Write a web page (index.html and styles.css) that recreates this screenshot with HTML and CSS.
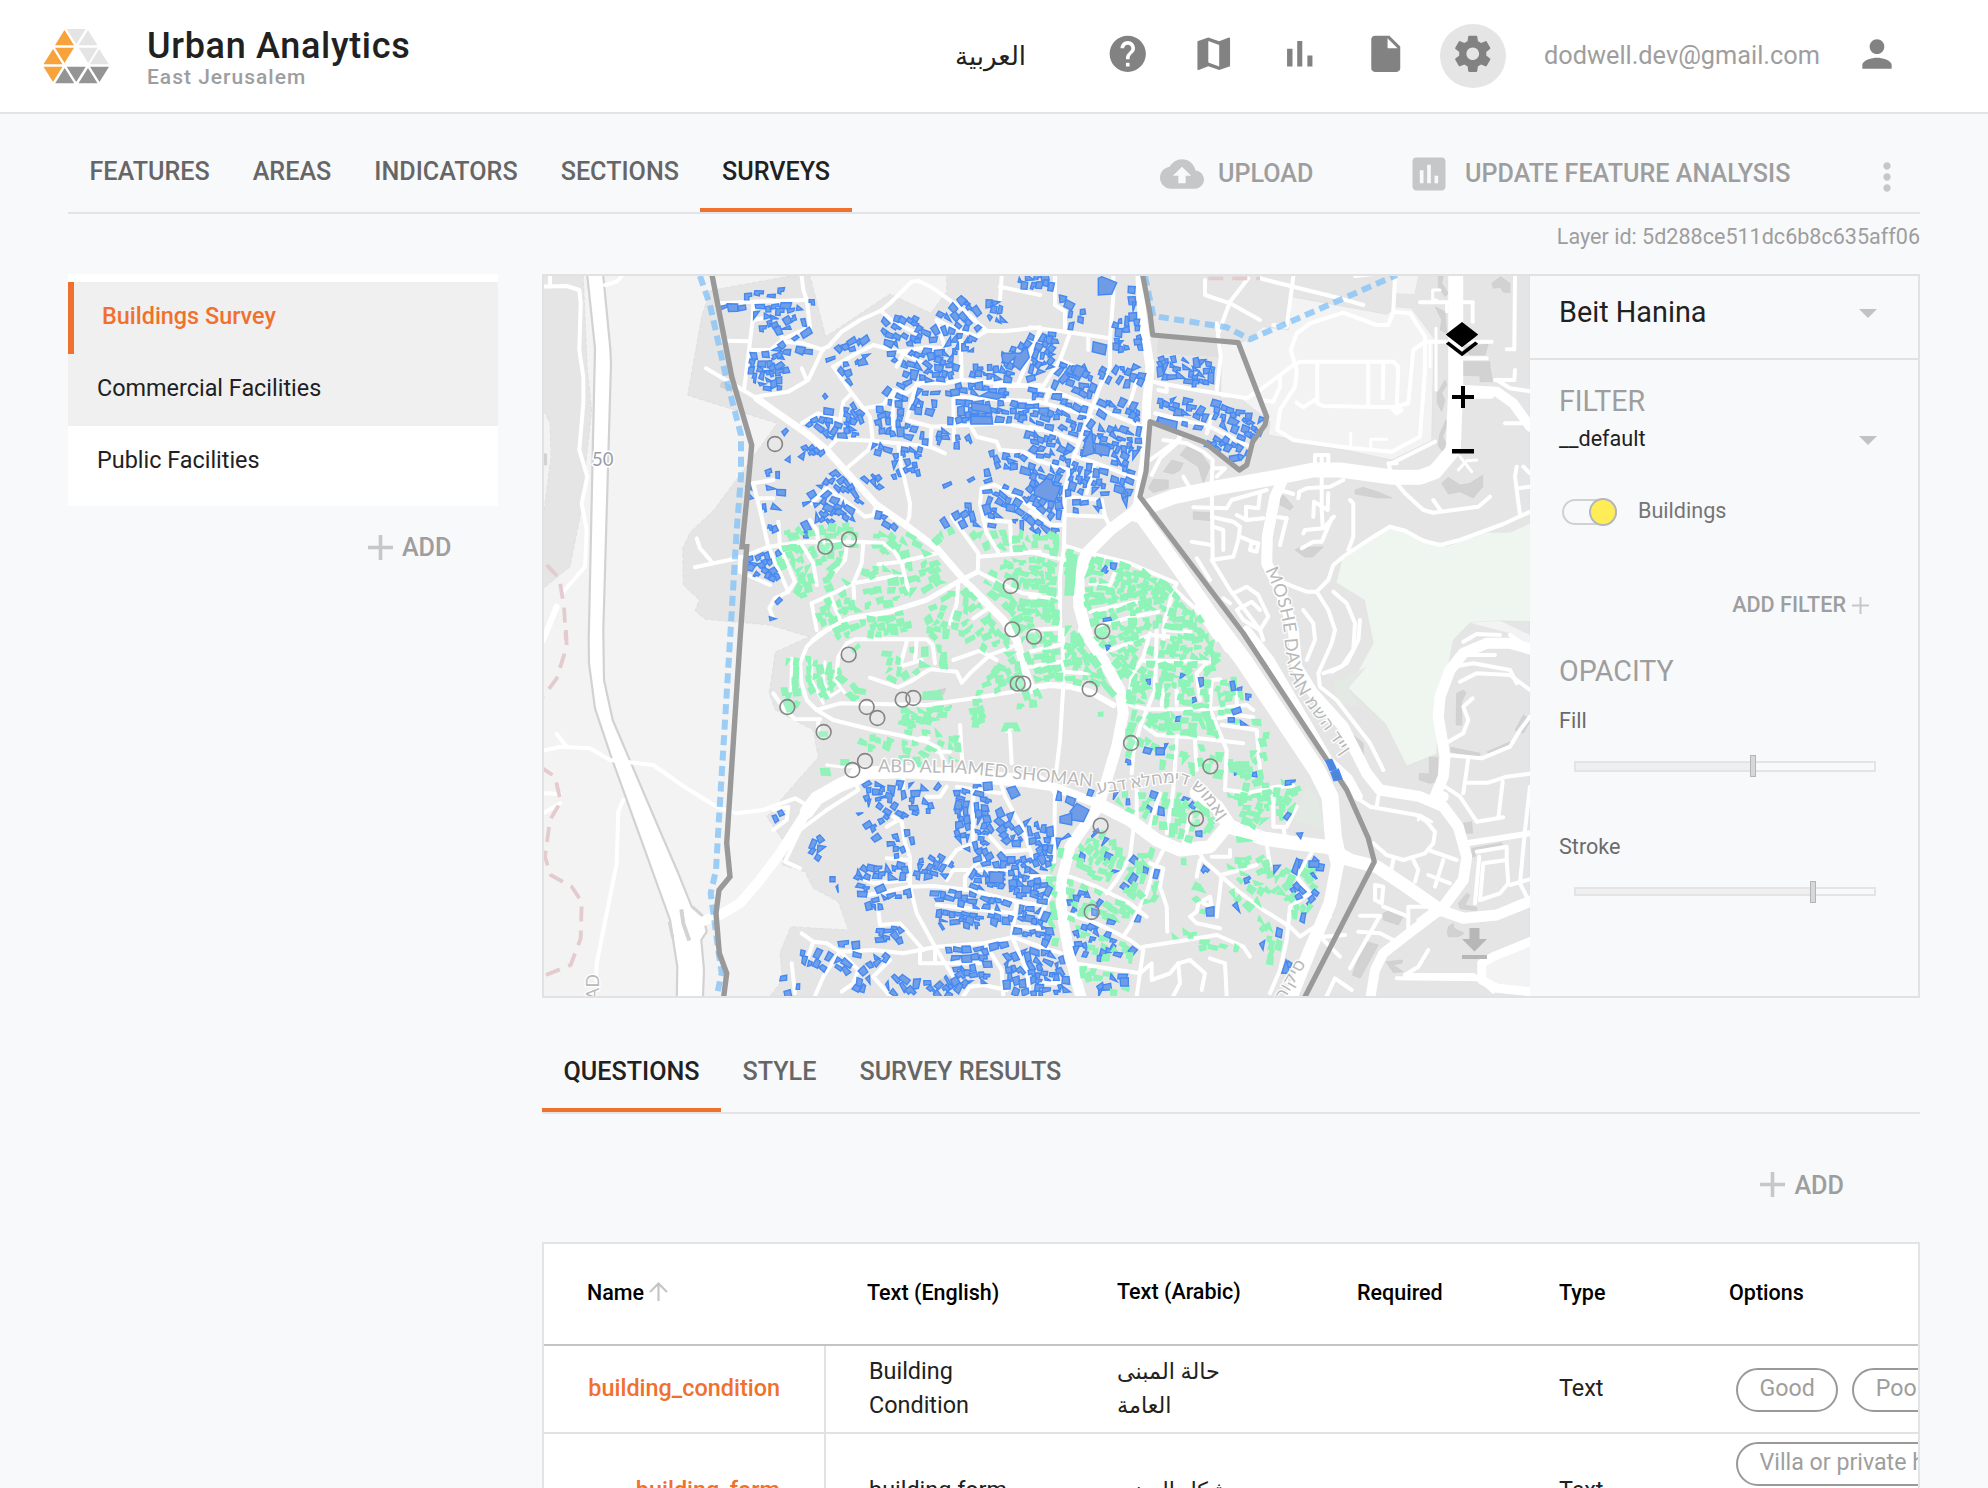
FILE: index.html
```html
<!DOCTYPE html>
<html lang="en">
<head>
<meta charset="utf-8">
<title>Urban Analytics</title>
<link rel="stylesheet" href="styles.css">
</head>
<body>
<header class="topbar">
  <svg class="logo" viewBox="43 28 67 56" aria-hidden="true">
    <g fill="#f7a23b"><path d="M64.5 30l9.5 15.300h-19zM53 49l9.500 15.200h-19zM55 47.700h19l-9.500 15.300zM43.500 66.800h19l-9.500 15.300z"/></g>
    <g fill="#e4e4e4"><path d="M66.700 29h19l-9.500 15.300zM88 30l9.500 15.300h-19zM78.700 47.700h19l-9.500 15.300zM99.200 49l9.500 15.200h-19z"/></g>
    <g fill="#949494"><path d="M64.700 68l9.500 15.200h-19zM66.700 66.800h19l-9.500 15.300zM88 68l9.500 15.200h-19zM90 66.800h19l-9.500 15.300z"/></g>
  </svg>
  <div class="brand"><div class="brand-title">Urban Analytics</div><div class="brand-sub">East Jerusalem</div></div>
  <div class="lang" lang="ar">العربية</div>
  <nav class="icons">
    <span class="ico"><svg viewBox="0 0 24 24"><path d="M12 2C6.480 2 2 6.480 2 12s4.480 10 10 10 10-4.480 10-10S17.520 2 12 2zm1 17h-2v-2h2v2zm2.070-7.750l-.9.920C13.450 12.900 13 13.500 13 15h-2v-.5c0-1.100.45-2.100 1.170-2.830l1.240-1.260c.37-.36.59-.86.59-1.410 0-1.100-.9-2-2-2s-2 .9-2 2H8c0-2.210 1.790-4 4-4s4 1.790 4 4c0 .88-.36 1.680-.93 2.250z"/></svg></span>
    <span class="ico"><svg viewBox="0 0 24 24"><path d="M20.500 3l-.16.030L15 5.100 9 3 3.360 4.900c-.21.070-.36.250-.36.480V20.500c0 .28.220.5.5.5l.16-.03L9 18.900l6 2.100 5.640-1.900c.21-.07.36-.25.360-.48V3.500c0-.28-.22-.5-.5-.5zM15 19l-6-2.110V5l6 2.110V19z"/></svg></span>
    <span class="ico"><svg viewBox="0 0 24 24"><path d="M5 9.200h3V19H5zM10.600 5h2.800v14h-2.800zm5.600 8H19v6h-2.800z"/></svg></span>
    <span class="ico"><svg viewBox="0 0 24 24"><path d="M6 2c-1.100 0-1.990.9-1.990 2L4 20c0 1.100.89 2 1.990 2H18c1.100 0 2-.9 2-2V8l-6-6H6zm7 7V3.500L18.500 9H13z"/></svg></span>
    <span class="ico active"><svg viewBox="0 0 24 24"><path d="M19.430 12.980c.04-.32.070-.64.070-.98s-.03-.66-.07-.98l2.110-1.650c.19-.15.240-.42.120-.64l-2-3.460c-.12-.22-.39-.3-.61-.22l-2.490 1c-.52-.4-1.080-.73-1.690-.98l-.38-2.650C14.460 2.180 14.250 2 14 2h-4c-.25 0-.46.180-.49.420l-.38 2.650c-.61.250-1.170.59-1.690.98l-2.490-1c-.23-.09-.49 0-.61.220l-2 3.460c-.13.220-.07.490.12.640l2.110 1.650c-.04.320-.07.650-.07.980s.03.660.07.980l-2.110 1.650c-.19.150-.24.420-.12.640l2 3.460c.12.220.39.300.61.220l2.490-1c.52.400 1.080.730 1.690.980l.38 2.650c.03.240.24.420.49.420h4c.25 0 .46-.18.490-.42l.38-2.650c.61-.25 1.170-.59 1.690-.98l2.490 1c.23.090.49 0 .61-.22l2-3.460c.12-.22.070-.49-.12-.64l-2.110-1.650zM12 15.500c-1.930 0-3.500-1.570-3.500-3.500s1.570-3.500 3.500-3.500 3.500 1.570 3.500 3.500-1.570 3.500-3.500 3.500z"/></svg></span>
  </nav>
  <div class="email">dodwell.dev@gmail.com</div>
  <svg class="person" viewBox="0 0 24 24"><path d="M12 12c2.210 0 4-1.790 4-4s-1.790-4-4-4-4 1.790-4 4 1.790 4 4 4zm0 2c-2.670 0-8 1.340-8 4v2h16v-2c0-2.660-5.330-4-8-4z"/></svg>
</header>

<div class="page">
  <div class="tabbar">
    <div class="tab">FEATURES</div><div class="tab">AREAS</div><div class="tab">INDICATORS</div><div class="tab">SECTIONS</div><div class="tab on">SURVEYS</div>
    <div class="actions">
      <svg class="i-cloud" viewBox="0 0 24 24"><path d="M19.350 10.040C18.670 6.590 15.640 4 12 4 9.110 4 6.600 5.640 5.350 8.040 2.340 8.360 0 10.910 0 14c0 3.310 2.690 6 6 6h13c2.760 0 5-2.240 5-5 0-2.640-2.050-4.780-4.650-4.960zM14 13v4h-4v-4H7l5-5 5 5h-3z"/></svg>
      <span class="act upload">UPLOAD</span>
      <svg class="i-chart" viewBox="0 0 24 24"><path d="M19 3H5c-1.100 0-2 .9-2 2v14c0 1.100.9 2 2 2h14c1.100 0 2-.9 2-2V5c0-1.100-.9-2-2-2zM9 17H7v-7h2v7zm4 0h-2V7h2v10zm4 0h-2v-4h2v4z"/></svg>
      <span class="act update">UPDATE FEATURE ANALYSIS</span>
      <svg class="i-more" viewBox="0 0 24 24"><path d="M12 8c1.100 0 2-.9 2-2s-.9-2-2-2-2 .9-2 2 .9 2 2 2zm0 2c-1.100 0-2 .9-2 2s.9 2 2 2 2-.9 2-2-.9-2-2-2zm0 6c-1.100 0-2 .9-2 2s.9 2 2 2 2-.9 2-2-.9-2-2-2z"/></svg>
    </div>
  </div>
  <div class="layerid">Layer id: 5d288ce511dc6b8c635aff06</div>

  <div class="columns">
    <aside class="side">
      <div class="list">
        <div class="item selected">Buildings Survey</div>
        <div class="item hover">Commercial Facilities</div>
        <div class="item">Public Facilities</div>
      </div>
      <div class="add side-add"><svg viewBox="0 0 25 25"><path d="M10.700 0h3.600v10.700H25v3.600H14.300V25h-3.600V14.300H0v-3.600h10.700z"/></svg><span>ADD</span></div>
    </aside>

    <main class="main">
      <section class="mapcard">
        <div class="mapwrap">
          <svg id="map" class="map" viewBox="544 276 986 720"></svg>
          <svg class="layers" viewBox="2 2 20 20"><path d="M11.990 18.540l-7.370-5.730L3 14.070l9 7 9-7-1.630-1.270-7.380 5.740zM12 16l7.360-5.730L21 9l-9-7-9 7 1.630 1.270L12 16z"/></svg>
          <svg class="zoomin" viewBox="0 0 22 22"><path d="M9 0h4v9h9v4h-9v9H9v-9H0V9h9z"/></svg>
          <svg class="zoomout" viewBox="0 0 22 5"><path d="M0 0h22v4.500H0z"/></svg>
          <svg class="download" viewBox="0 0 25 31"><path d="M7.500 0h10v11H25L12.500 23.500 0 11h7.500zM0 27h25v4H0z"/></svg>
        </div>
        <div class="controls">
          <div class="area"><span>Beit Hanina</span><i class="caret"></i></div>
          <div class="filter">
            <div class="cap">FILTER</div>
            <div class="default"><span>__default</span><i class="caret"></i></div>
            <div class="toggle-row"><span class="toggle"><span class="knob"></span></span><span class="toggle-label">Buildings</span></div>
            <div class="addfilter"><span>ADD FILTER</span><svg viewBox="0 0 17 17"><path d="M7.500 0h2v7.500H17v2H9.500V17h-2V9.500H0v-2h7.500z"/></svg></div>
            <div class="cap opacity">OPACITY</div>
            <div class="lbl">Fill</div>
            <div class="slider"><div class="track"><div class="fill" style="width:59.3%"></div></div><div class="thumb" style="left:58.3%"></div></div>
            <div class="lbl stroke">Stroke</div>
            <div class="slider thin"><div class="track"><div class="fill" style="width:79.200%"></div></div><div class="thumb" style="left:78.100%"></div></div>
          </div>
        </div>
      </section>

      <div class="tabbar second"><div class="tab on q">QUESTIONS</div><div class="tab">STYLE</div><div class="tab">SURVEY RESULTS</div></div>
      <div class="add table-add"><svg viewBox="0 0 25 25"><path d="M10.700 0h3.600v10.700H25v3.600H14.300V25h-3.600V14.300H0v-3.600h10.700z"/></svg><span>ADD</span></div>

      <section class="table">
        <div class="row head">
          <div class="c-name">Name<svg viewBox="0 0 19 19"><path d="M9.500 19V1.500M1 10l8.500-8.500L18 10" fill="none" stroke="#c6c6c6" stroke-width="2.200"/></svg></div>
          <div class="c-en">Text (English)</div><div class="c-ar">Text (Arabic)</div><div class="c-req">Required</div><div class="c-type">Type</div><div class="c-opt">Options</div>
        </div>
        <div class="row">
          <div class="c-name"><span>building_condition</span></div>
          <div class="c-en">Building<br>Condition</div><div class="c-ar" lang="ar">حالة المبنى<br>العامة</div><div class="c-req"></div><div class="c-type">Text</div>
          <div class="c-opt"><span class="chip">Good</span><span class="chip">Poor</span></div>
        </div>
        <div class="row tall">
          <div class="c-name"><span>building_form</span></div>
          <div class="c-en">building form</div><div class="c-ar" lang="ar">شكل المبنى</div><div class="c-req"></div><div class="c-type">Text</div>
          <div class="c-opt"><span class="chip">Villa or private house</span></div>
        </div>
      </section>
    </main>
  </div>
</div>
<script src="map.js"></script>
</body>
</html>
```
FILE: styles.css
```css
* { box-sizing: border-box; }
html, body { margin: 0; }
body {
  height: 1488px;
  overflow: hidden;
  background: #f8f9fb;
  color: #212121;
  font-family: Roboto, "DejaVu Sans", sans-serif;
  font-size: 23.400px;
}
svg { display: block; }

.topbar {
  display: flex;
  height: 114px;
  background: #fff;
  border-bottom: 2px solid #e2e4e6;
  padding-left: 43px;
}
.logo { width: 67px; height: 56px; margin-top: 28px; }
.brand { margin-left: 37px; padding-top: 25px; width: 808px; }
.brand-title { font-size: 36px; line-height: 43px; font-weight: 500; letter-spacing: .68px; }
.brand-sub { font-size: 21px; line-height: 19px; font-weight: 500; color: #9e9e9e; letter-spacing: 1px; }
.lang { width: 140px; font-size: 26px; line-height: 112px; }
.icons { display: flex; gap: 20px; margin-top: 24px; }
.ico { width: 66px; height: 64px; display: flex; justify-content: center; padding-top: 8px; border-radius: 50%; }
.ico.active { background: #e5e5e5; margin-left: 1px; }
.ico svg { width: 43.500px; height: 43.500px; fill: #828282; }
.email { width: 274px; margin-left: 38px; font-size: 25.300px; line-height: 112px; color: #9e9e9e; white-space: nowrap; }
.person { width: 44px; height: 44px; margin: 32px 0 0 37px; fill: #828282; }

.page { padding: 0 68px; }
.tabbar { display: flex; height: 100px; border-bottom: 2px solid #e2e4e6; }
.tab {
  padding: 41px 21.500px 0;
  line-height: 34px;
  font-size: 25.150px;
  font-weight: 500;
  color: #666;
  white-space: nowrap;
}
.tab.on { color: #212121; border-bottom: 4px solid #f0702e; }
.actions { display: flex; margin-left: auto; color: #9e9e9e; font-weight: 500; font-size: 25.150px; }
.actions svg { fill: #c6c7c9; }
.act { line-height: 34px; padding-top: 43px; white-space: nowrap; }
.upload { width: 195px; margin-left: 14px; }
.update { width: 400px; margin-left: 20px; }
.i-cloud { width: 44px; height: 44px; margin-top: 38px; }
.i-chart { width: 44px; height: 44px; margin: 38px -6px 0 -6px; }
.i-more { width: 44px; height: 44px; margin: 41px 11px 0 0; }
.layerid { height: 60px; padding-top: 11px; line-height: 24px; font-size: 21.550px; text-align: right; color: #9e9e9e; }

.columns { display: flex; gap: 44px; }
.side { width: 430px; }
.list { background: #fff; padding: 8px 0; }
.item { height: 72px; line-height: 68px; padding-left: 29px; }
.item.hover { background: #f0f0f0; }
.item.selected { background: #f0f0f0; color: #f0702e; font-weight: 500; border-left: 6px solid #f0702e; padding-left: 28px; }
.add { display: flex; align-items: center; justify-content: flex-end; gap: 9px; color: #9e9e9e; font-weight: 500; font-size: 25.200px; }
.add svg { width: 25px; height: 25px; fill: #c6c7c9; }
.add span { position: relative; top: .5px; }
.side-add { padding: 27px 46.500px 0 0; }
.side-add span { top: 0; }

.main { width: 1378px; }
.mapcard { display: flex; height: 724px; border: 2px solid #e2e2e2; }
.mapwrap { position: relative; width: 986px; height: 720px; }
.map { width: 986px; height: 720px; background: #f3f3f3; }
.layers, .zoomin, .zoomout, .download { position: absolute; }
.layers { left: 900px; top: 46px; width: 36px; height: 36px; }
.zoomin { left: 908px; top: 110px; width: 22px; height: 22px; }
.zoomout { left: 908px; top: 173px; width: 22px; height: 5px; }
.download { left: 918px; top: 652px; width: 25px; height: 31px; fill: #b7b7b7; }

.controls { flex: 1; }
.caret { border: 9px solid transparent; border-top-color: #c0c2c4; border-bottom: 0; }
.area { display: flex; align-items: center; justify-content: space-between; height: 84px; padding: 0 41px 8px 29px; border-bottom: 2px solid #e2e2e2; font-size: 28.800px; }
.area span { margin-top: -2px; }
.filter { padding: 24px 41px 0 29px; }
.cap { font-size: 28.600px; line-height: 34px; color: #9e9e9e; }
.default { display: flex; align-items: center; justify-content: space-between; height: 42px; font-size: 21.600px; }
.default span { margin-top: -2px; }
.default .caret { margin-top: 3px; }
.toggle-row { display: flex; align-items: center; height: 28px; margin-top: 38px; }
.toggle { position: relative; width: 55px; height: 26px; margin-left: 3px; border: 2px solid #d0d1d3; border-radius: 13px; }
.knob { position: absolute; right: -2px; top: -3px; width: 28px; height: 28px; border-radius: 50%; background: #ffed57; border: 2px solid #b5b6ba; }
.toggle-label { margin-left: 21px; padding-bottom: 3px; font-size: 21.600px; color: #757575; }
.addfilter { display: flex; align-items: center; justify-content: flex-end; gap: 6px; margin: 65px 8px 0 0; height: 26px; font-size: 21.600px; font-weight: 500; color: #9e9e9e; }
.addfilter svg { width: 17px; height: 17px; fill: #c6c7c9; margin-top: 2px; }
.opacity { margin-top: 37px; }
.lbl { font-size: 21.600px; line-height: 26px; color: #6b6b6b; margin-top: 20px; }
.slider { position: relative; width: 302px; margin: 27px 0 0 15px; }
.track { height: 11px; border: 2px solid #e4e4e4; }
.slider.thin { margin-top: 27px; }
.slider.thin .track { height: 9px; }
.fill { height: 100%; background: #efefef; }
.thumb { position: absolute; top: -6px; width: 6px; height: 22px; background: #d8d8d8; border: 1px solid #b5b5b5; }
.stroke { margin-top: 62px; }

.tabbar.second { height: 116px; }
.second .tab { padding-top: 57px; }
.table-add { padding: 58px 76px 0 0; height: 83px; }
.table { margin-top: 45px; height: 260px; border: 2px solid #e2e4e6; background: #fff; overflow: hidden; }
.row { display: flex; width: 1700px; height: 88px; border-bottom: 2px solid #e2e2e2; align-items: center; }
.row > div { flex: none; }
.row .c-name { width: 282px; height: 100%; padding-right: 44px; border-right: 2px solid #e2e2e2; display: flex; align-items: center; justify-content: flex-end; color: #f0702e; font-weight: 500; }
.row .c-name span { margin-top: -2px; }
.c-en { width: 248px; padding-left: 43px; line-height: 34px; }
.c-ar { width: 283px; padding-left: 43px; font-size: 22.300px; line-height: 34px; padding-bottom: 2px; }
.c-req { width: 202px; }
.c-type { width: 170px; }
.c-en, .c-type { padding-bottom: 3px; }
.row .c-opt { width: 500px; padding-left: 7px; display: flex; flex-wrap: nowrap; gap: 14px; }
.chip { height: 44px; line-height: 37px; padding: 0 21.500px; border: 2px solid #999; border-radius: 22px; color: #9e9e9e; font-size: 23.200px; white-space: nowrap; margin-top: 2px; }
.head { height: 102px; border-bottom-color: #c4c4c4; font-size: 21.500px; font-weight: 500; color: #000; padding-bottom: 4px; }
.head .c-name { border: 0; justify-content: flex-start; padding-left: 43px; color: #000; gap: 5px; }
.head .c-name svg { width: 19px; height: 19px; margin-top: -2px; }
.head .c-en { padding: 1px 0 0 41px; }
.head .c-ar { font-size: 21.500px; padding-bottom: 0; }
.head .c-type { padding-bottom: 0; }
.head .c-opt { padding-left: 0; }
.tall { height: 116px; }
.tall .c-opt { align-self: flex-start; padding-top: 6px; }
```
FILE: map.js
```js
// Basemap and survey layers. Geometry is stored in four tiles, three units per pixel.
const NS = "http://www.w3.org/2000/svg";
const map = document.getElementById("map");
const TILE = { a: [540, 270], b: [1030, 270], c: [540, 630], d: [1030, 630] };

function pts(tile, s) {
  const [ox, oy] = TILE[tile];
  return s.trim().split(/\s+/).map(p => {
    const [x, y] = p.split(",").map(Number);
    return [ox + x / 3, oy + y / 3];
  });
}
function el(name, attrs, parent = map) {
  const n = document.createElementNS(NS, name);
  for (const k in attrs) n.setAttribute(k, attrs[k]);
  parent.appendChild(n);
  return n;
}
const d = p => "M" + p.map(q => q[0].toFixed(1) + " " + q[1].toFixed(1)).join("L");
const poly = (p, attrs) => el("path", { d: d(p) + "Z", ...attrs });
const line = (p, attrs) => el("path", { d: d(p), fill: "none", "stroke-linejoin": "round", ...attrs });

// Land use
const urban = { fill: "#e5e5e5", stroke: "#d6d6d6", "stroke-width": .6, "stroke-dasharray": "5 2" };
poly(pts("a", "0,0 130,18 142,300 155,420 120,740 90,890 10,955 10,740 33,560 30,460 0,400"), urban);
const city = [
  ...pts("a", "510,62 750,18 810,18 857,200 1050,72 1172,130 1220,66 1220,0"),
  ...pts("b", "1500,0"), ...pts("d", "1500,1110"),
  ...pts("c", "690,1098 727,1050 720,970 752,890 925,900 895,815 820,775 795,725 728,705 735,640 680,560 735,495 835,382 820,300 706,240 688,190 706,66 808,20"),
  ...pts("a", "690,1065 495,1048 465,1022 478,990 430,945 428,835 452,785 520,722 640,560 712,460 443,376 485,140")
];
poly(city, urban);
poly(pts("b", "785,80 1070,133 1100,110 1145,115 1212,205 1205,512 1085,570 850,520 715,495 720,455 630,385 572,385 575,210 640,215 700,170 775,180"), { fill: "#f3f3f3", stroke: "#dcdcdc", "stroke-width": .6 });
poly(pts("b", "1095,0 1168,0 1153,72 1090,70"), { fill: "#f3f3f3" });
poly(pts("b", "385,200 560,215 570,262 380,250"), { fill: "#dfdfdf" });
poly(pts("b", "1030,800 1080,770 1250,828 1370,787 1440,787 1510,755 1510,1055 1410,1052 1320,1058 1270,1110 1245,1240 1225,1350 1220,1452 1130,1488 1065,1360 955,1255 1030,1120 1003,990 918,938 935,870"), { fill: "#eff6f0", stroke: "#dbe2dc", "stroke-width": .6 });
poly(pts("d", "910,160 1010,110 955,175 990,230 930,220"), { fill: "#e3e9e3" });
poly(pts("d", "830,460 790,570 885,600 860,500"), { fill: "#e3e9e3" });
poly(pts("b", "1320,1058 1410,1052 1510,1100 1510,1150 1440,1090"), { fill: "#f3f3f3" });
poly(pts("d", "1360,985 1500,920 1510,1098 1370,1070"), { fill: "#f3f3f3" });

// Built-up blocks of the basemap
const blocks = [
  ["b", "1385,40 1412,20 1440,40 1440,68 1418,66 1412,52 1390,55"], ["b", "1290,275 1380,275 1380,290 1388,335 1350,335 1350,318 1292,316"],
  ["b", "1300,230 1375,222 1365,255 1320,255"], ["b", "1235,640 1255,622 1290,645 1320,640 1358,616 1358,650 1330,684 1290,665 1255,672"],
  ["b", "975,660 1000,652 1050,668 1085,684 1045,684 975,672"], ["b", "795,840 810,832 880,830 850,860 825,862"], ["b", "490,725 545,728 540,752 490,748"],
  ["b", "355,655 370,628 415,630 415,655 370,668"], ["b", "400,605 425,570 460,580 450,600 430,612"], ["b", "450,555 470,530 510,545 540,590 520,640 505,590"],
  ["b", "750,670 765,680 790,710 780,720 750,705"], ["b", "1225,18 1240,18 1235,40 1255,70 1245,80 1225,50"], ["b", "1215,110 1245,125 1250,190 1230,180 1235,150"],
  ["b", "1245,330 1250,345 1235,370 1245,390 1235,425 1222,400 1222,370"], ["b", "1248,450 1250,470 1238,500 1248,520 1238,545 1224,525 1230,490"],
  ["d", "1280,190 1300,180 1308,188 1295,215 1295,285 1278,285"], ["d", "1262,352 1350,370 1348,380 1262,366"], ["d", "1372,365 1440,335 1450,345 1375,374"],
  ["d", "1455,300 1480,255 1500,268 1500,275 1480,310"], ["d", "1198,382 1223,382 1223,455 1200,460 1168,450 1168,430 1198,432"],
  ["d", "1060,850 1080,840 1120,860 1105,885 1060,870"], ["d", "1003,933 1045,945 990,1045 967,1035"], ["d", "1285,820 1310,790 1320,795 1305,825 1340,832 1340,842 1290,836"],
  ["d", "1255,890 1270,880 1272,895 1303,910 1285,920 1255,920 1252,905"], ["d", "1068,995 1118,990 1115,1000 1090,1005 1120,1025 1090,1028"],
  ["d", "1325,655 1415,638 1418,645 1340,660 1335,680 1325,682"], ["d", "1300,580 1325,575 1328,610 1305,610"], ["d", "940,290 1000,340 1000,390 1015,410 1000,405 985,350"],
  ["a", "545,335 580,345 575,365 540,350"], ["c", "1200,1050 1260,1030 1260,1075 1215,1080"], ["a", "5,550 20,552 20,585 5,585"], ["c", "1195,180 1217,175 1210,195"]
];
blocks.forEach(([t, s]) => poly(pts(t, s), { fill: "#d2d2d2", stroke: "#c9c9c9", "stroke-width": .5 }));

// Roads: [tile, width, vertices]
const roads = [
  ["a", 4, "0,50 80,48 118,60 122,100 118,240 130,320 130,400 118,540 142,620 125,700 140,780 135,890 70,965"], ["a", 6, "50,1010 10,1110"], ["a", 4, "195,45 230,35 245,18"], ["a", 4, "30,18 30,50"],
  ["a", 4, "540,100 640,95 800,90"], ["a", 4, "785,20 790,60 800,90 810,170 735,205 690,240 630,240"], ["a", 4, "640,95 638,150 612,360"], ["a", 4, "550,212 630,214"], ["a", 4, "638,150 670,145"],
  ["a", 4, "498,295 650,385"], ["a", 4, "660,378 745,365 805,330 850,235 865,230 905,185 960,150 1022,122 1050,100 1115,35 1135,32 1180,55 1270,120 1340,182 1390,184 1500,172"],
  ["a", 4, "725,200 730,215 790,220 850,240"], ["a", 4, "785,295 800,330"],
  ["a", 4, "1022,122 1060,155 1130,190"], ["a", 4, "880,290 950,250 1000,225 1080,245 1160,232 1215,235 1190,150 1220,165 1310,200 1340,182"], ["a", 4, "880,290 935,370 990,440 998,510 985,540 925,590"], ["a", 4, "935,370 910,395 900,450 835,430 785,460"],
  ["a", 4, "975,415 1030,405 1060,360 1100,370 1140,340 1215,340 1265,330 1500,350"], ["a", 4, "1070,290 1090,250 1150,280"], ["a", 4, "1265,330 1262,210"], ["a", 4, "1240,380 1500,395"], ["a", 4, "1365,350 1500,345"], ["a", 4, "1385,18 1380,90"], ["a", 4, "1380,50 1500,75"], ["a", 4, "1500,180 1435,340"],
  ["a", 4, "1060,360 1060,480"], ["a", 4, "1130,340 1100,450 1175,470 1290,465 1390,460 1500,480"], ["a", 4, "1240,380 1242,512"], ["a", 4, "1290,465 1310,500 1370,515 1380,540 1450,545 1500,575"], ["a", 4, "870,530 890,508 995,512 1075,520 1170,530 1215,550"], ["a", 4, "1175,470 1170,530"],
  ["a", 4, "1075,520 1080,570 1110,700 1108,740 1095,770"], ["a", 4, "815,700 860,655 905,685 975,740 1000,735 1010,705"], ["a", 4, "640,640 700,630"], ["a", 4, "640,640 660,720 685,830"], ["a", 4, "650,685 700,685"],
  ["a", 4, "465,892 605,862 685,830 800,815 960,815 1030,820 1060,840 1085,880 1105,960"], ["a", 4, "470,805 480,835 515,875"], ["a", 4, "600,860 600,905 690,945"], ["a", 4, "715,755 720,830 765,935 745,965 705,985 688,1015 700,1045"], ["a", 4, "685,830 745,965"],
  ["a", 4, "780,815 820,880 830,945"], ["a", 4, "835,820 830,780 810,750"], ["a", 4, "920,830 915,870 885,905"], ["a", 4, "970,820 965,880 940,940 943,985"], ["a", 4, "1015,883 1085,875 1190,850"], ["a", 4, "815,1000 870,975 940,940 1085,915"], ["a", 4, "815,1000 830,1080"], ["a", 4, "870,975 900,1050"],
  ["a", 5, "820,1110 860,1080 930,1045 1050,1025 1160,990 1255,935 1313,905"], ["a", 4, "1255,935 1250,1000 1230,1060"], ["a", 4, "1235,740 1315,850 1313,905 1380,940 1450,970 1500,975"], ["a", 4, "1315,860 1500,845"], ["a", 4, "1500,730 1430,680 1365,645 1325,655 1320,700 1340,790 1375,845"], ["a", 4, "1330,750 1410,755 1415,845"], ["a", 4, "1300,1045 1345,1015"],
  ["a", 7, "650,385 700,420 800,490 860,540 1010,705 1090,760 1190,835 1290,950"], ["a", 8, "1290,950 1390,1050 1430,1110 1450,1185 1475,1260"],
  ["b", 4, "75,18 75,105 105,125 105,185 0,172"], ["b", 4, "105,185 240,205"], ["b", 4, "250,18 250,80 240,205 240,290 210,350 180,430 120,590 105,660 102,830 90,920 90,1110"], ["b", 4, "30,180 0,250"], ["b", 4, "120,190 90,270 35,355"], ["b", 4, "175,205 175,240"], ["b", 4, "90,270 125,285"], ["b", 4, "0,350 90,370 180,405 335,470"], ["b", 4, "60,355 45,400 0,392"], ["b", 4, "45,400 185,440"], ["b", 4, "0,470 80,490 140,515"], ["b", 4, "140,560 200,580 320,625"], ["b", 4, "0,560 50,580 115,600"], ["b", 4, "195,580 170,670"], ["b", 4, "105,680 215,690 225,740 105,735"], ["b", 4, "225,740 240,770"], ["b", 4, "0,725 65,765 102,765"], ["b", 4, "0,845 105,870"], ["b", 4, "320,330 300,400"],
  ["b", 4, "370,335 500,360 650,385 690,360 790,285"], ["b", 4, "385,340 410,345 410,365 385,360"], ["b", 4, "560,160 572,260 560,360"], ["b", 4, "375,430 540,470 660,530"], ["b", 4, "545,440 530,490"],
  ["b", 4, "525,30 525,75 600,100 690,150"], ["b", 4, "655,25 600,95 565,190"], ["b", 4, "690,25 790,50 930,85 1000,105"], ["b", 4, "790,20 770,170 730,165"], ["b", 4, "975,18 1030,12"], ["b", 4, "1095,20 1090,125 1075,165 1040,165 940,128 840,160 800,190 782,240 800,300 795,350 750,420 742,480 790,510 930,530 1085,545 1170,500 1185,300 1185,200 1140,130 1090,125"],
  ["b", 4, "790,285 810,275 1090,275 1105,290 1100,420"], ["b", 4, "862,280 862,400 880,408 1090,412 1135,400 1150,240 1185,215 1385,215"], ["b", 4, "1015,280 1015,410"], ["b", 4, "1060,280 1058,385"], ["b", 4, "860,385 820,412 800,398"], ["b", 4, "1100,410 1115,420 1100,430 1088,418 1100,408"], ["b", 4, "750,320 750,350 730,395 690,390"], ["b", 3, "962,490 962,525"], ["b", 3, "1070,508 1022,508 1022,535"],
  ["b", 4, "1170,97 1328,97 1328,155"], ["b", 3, "1220,90 1208,90 1208,60 1230,60"], ["b", 3, "1218,175 1218,360"], ["b", 3, "1200,220 1200,290"], ["b", 3, "1250,100 1250,125"], ["b", 4, "1455,20 1453,238 1430,238"], ["b", 4, "1260,265 1370,265"], ["b", 4, "1300,380 1385,380"], ["b", 4, "1455,300 1453,330 1395,330"], ["b", 4, "1400,330 1440,355 1510,365"], ["b", 4, "1425,460 1510,460"], ["b", 3, "1290,560 1325,605"], ["b", 3, "1340,570 1310,572 1285,600"],
  ["b", 10, "1300,360 1400,365 1450,400 1500,470"], ["b", 4, "1460,590 1455,620 1470,735"], ["b", 4, "1480,590 1500,610"], ["b", 4, "1465,655 1500,650"],
  ["b", 15, "1277,0 1277,350 1270,540 1215,605 1170,622 1090,622 930,600 850,600 740,622 550,655 430,680 340,715 320,735"],
  ["b", 4, "1085,580 1215,515"], ["b", 4, "1100,640 1125,670 1180,720 1210,728 1345,710 1380,680"], ["b", 4, "1210,690 1232,722"], ["b", 4, "1085,615 1075,580 1100,580"], ["b", 4, "855,590 855,555 895,555 895,590"], ["b", 4, "875,560 875,720 878,770"], ["b", 4, "940,630 900,650 830,655 808,665 805,685"], ["b", 4, "895,670 893,720 852,695 850,740"], ["b", 4, "820,790 825,780 880,775 912,740"], ["b", 4, "905,745 875,815 850,815 815,835"], ["b", 4, "960,690 970,700 970,800 955,840"],
  ["b", 4, "365,615 390,565 445,515 450,490"], ["b", 4, "360,570 450,505"], ["b", 4, "400,510 470,520 520,545 548,570 545,640 548,870"], ["b", 4, "460,620 478,650"], ["b", 4, "550,595 585,595 560,620"],
  ["b", 4, "490,712 590,715 605,690 710,660"], ["b", 4, "545,740 610,755 630,770 625,810 610,860 545,870"], ["b", 4, "550,770 580,780 580,840"], ["b", 4, "485,815 545,825"], ["b", 4, "500,865 540,930"], ["b", 4, "648,750 648,710 685,715 690,670"], ["b", 4, "620,735 650,750 700,745"], ["b", 4, "660,840 665,815 685,820 680,845 660,840"], ["b", 4, "630,800 665,815"], ["b", 4, "750,660 790,672"], ["b", 4, "770,745 750,825"], ["b", 4, "745,742 770,745"],
  ["b", 11, "760,625 735,680 712,800 710,880 750,960 790,1080 800,1190 850,1270 940,1370 1010,1510 1050,1560 1170,1580 1240,1610 1285,1670 1310,1760 1300,1830 1240,1910"],
  ["b", 4, "545,870 600,960 690,1080 700,1110"], ["b", 4, "610,970 650,950 685,975 715,1040 690,1080 640,1050 620,1020 665,995 690,1020"], ["b", 4, "580,985 600,1000"],
  ["b", 4, "745,930 790,950 830,965 860,965 895,930 910,885 940,860 1030,800 1080,770 1125,782 1180,812 1230,825 1290,810 1420,762 1500,725"], ["b", 4, "860,965 895,1020 915,1080 905,1120 865,1210 870,1250 920,1290 1020,1420 1060,1500"], ["b", 4, "910,965 950,1000 975,1060 970,1140 935,1190 880,1210"], ["b", 4, "820,1020 850,1060 855,1110 830,1170"], ["b", 4, "990,1050 985,1110 950,1180 905,1205"],
  ["b", 9, "330,18 335,130 360,290 350,400 345,560 320,720"], ["b", 12, "320,720 240,780 170,850 145,920 148,1010 170,1090"],
  ["b", 4, "105,828 180,850 300,880 440,940 430,960 405,1050 400,1110"], ["b", 4, "180,1025 320,995"], ["b", 4, "180,940 240,945 255,905"], ["b", 4, "200,1070 290,1045 385,1025"], ["b", 4, "0,980 90,985"], ["b", 4, "0,1080 90,1075"], ["b", 4, "430,955 500,1020 560,1110"], ["b", 4, "400,1080 480,1085"],
  ["c", 4, "10,362 60,350 150,355 210,390 340,405 440,475 530,530 590,550 670,540 765,505 800,525"], ["c", 4, "50,312 80,350"], ["c", 4, "250,510 235,545 230,700 190,900 170,1000 168,1050"], ["c", 4, "10,490 60,492"], ["c", 4, "60,520 10,550"],
  ["c", 10, "470,880 540,855 600,820 660,750 720,670 800,545"], ["c", 14, "800,545 830,505 900,465 960,440"], ["c", 13, "950,430 1100,425 1250,435 1500,455"],
  ["c", 4, "830,240 800,210 785,160 780,100 800,50 840,10"], ["c", 4, "830,240 900,220 1160,225 1300,205 1420,185 1500,170"], ["c", 4, "830,240 880,270 1000,300 1100,320 1160,335 1195,355 1215,400"], ["c", 4, "700,190 735,240 765,267 840,268"], ["c", 4, "835,270 835,300"], ["c", 4, "890,120 895,80 920,40 945,28 1160,28 1178,45 1185,100"], ["c", 3, "755,85 752,190"], ["c", 3, "815,95 815,150 850,220"], ["c", 3, "855,95 850,150 870,200 900,180"], ["c", 3, "895,100 885,150 915,190"], ["c", 4, "990,143 1075,172 1110,155 1170,118 1250,125 1265,158 1290,130 1350,75 1430,45"], ["c", 4, "1100,35 1080,110 1145,90"], ["c", 4, "1130,30 1125,90"], ["c", 4, "1240,90 1320,62 1370,90"],
  ["c", 4, "1260,285 1265,370 1270,420"], ["c", 4, "1410,310 1415,400"], ["c", 4, "1190,365 1230,365"], ["c", 4, "1140,325 1165,325"], ["c", 3, "860,405 900,410 960,410"], ["c", 3, "1400,305 1415,295"],
  ["c", 4, "1090,440 1090,480"], ["c", 4, "945,450 955,480 860,540 780,600 735,695 780,715"], ["c", 4, "700,600 740,570 745,530 700,540"], ["c", 4, "1060,560 1085,575 1095,640 1110,680 1110,770 1130,850 1185,950 1240,1040"], ["c", 4, "1040,590 1075,570"], ["c", 4, "1040,685 1110,690"], ["c", 4, "975,750 1000,760 1110,750"], ["c", 4, "985,795 1110,770 1180,768 1290,780 1430,815 1500,825"], ["c", 4, "1190,825 1420,850"], ["c", 4, "1300,480 1300,640 1250,660 1220,700"], ["c", 4, "1250,470 1380,490"], ["c", 4, "1380,450 1395,500 1450,600 1480,690"], ["c", 4, "1350,620 1390,665 1465,660"], ["c", 4, "1220,750 1240,720 1400,720"], ["c", 4, "1275,780 1275,740 1310,700 1340,690"], ["c", 4, "1430,815 1415,920"], ["c", 4, "1015,840 1020,885 1080,880 1150,960"], ["c", 4, "900,965 1000,960 1090,970 1190,950 1330,940 1420,922 1500,950"], ["c", 4, "785,910 820,935 860,940 900,965 850,1040 825,1098"], ["c", 4, "820,935 805,980"], ["c", 4, "900,965 955,1020 940,1060 905,1085"], ["c", 4, "755,1000 765,1090"], ["c", 4, "1050,990 1000,1040 1050,1098"], ["c", 4, "1140,960 1140,1000 1320,1000"], ["c", 4, "1185,950 1185,1000"], ["c", 4, "1340,950 1385,1020 1390,1098"], ["c", 4, "1420,930 1460,1020 1470,1098"], ["c", 4, "1160,500 1200,500 1220,470"], ["c", 4, "1270,1098 1290,1070 1330,1065 1400,1080"], ["c", 4, "1430,890 1500,895"],
  ["d", 6, "0,175 60,165 120,170 180,185 250,225"], ["d", 11, "160,0 220,90 270,180 280,250 260,350 230,450 205,530 120,650 95,750 95,850 120,980 155,1110"],
  ["d", 4, "100,0 100,170 90,330 78,430"], ["d", 4, "0,65 100,42"], ["d", 4, "0,110 90,95"], ["d", 4, "90,125 170,130"], ["d", 4, "215,70 360,15 420,20"], ["d", 4, "360,10 340,80 305,140 300,180"], ["d", 4, "380,0 375,180 330,290 310,370 305,430"], ["d", 4, "340,92 560,95"], ["d", 4, "300,225 350,238 540,238 650,225 670,240"], ["d", 4, "540,90 500,130 510,210"], ["d", 4, "570,148 545,150 540,238 590,360 585,480"], ["d", 4, "345,290 380,315 480,322 640,340"], ["d", 4, "400,180 395,225"], ["d", 4, "440,180 440,225"], ["d", 4, "565,265 620,255 670,262"], ["d", 4, "575,285 680,300 690,420"], ["d", 4, "440,330 430,480"], ["d", 4, "495,330 500,420"], ["d", 4, "590,480 660,488 740,470 790,468"], ["d", 4, "730,490 730,590 760,590 765,620"], ["d", 4, "770,590 800,530"], ["d", 4, "620,190 620,225"],
  ["d", 13, "200,520 300,570 380,630 450,660 540,650 590,590"], ["d", 14, "500,490 560,530 600,590 700,625 800,640 890,650"], ["d", 4, "320,480 320,560"], ["d", 4, "390,490 355,600"], ["d", 4, "430,480 410,610"], ["d", 4, "480,560 460,640"], ["d", 4, "0,460 60,470 75,490 72,700"], ["d", 4, "0,740 60,740"], ["d", 9, "0,460 70,470 200,520"],
  ["d", 4, "500,650 520,690 620,780 700,840 780,890 810,920 900,860"], ["d", 4, "575,735 680,705"], ["d", 4, "575,735 560,860"], ["d", 4, "545,680 600,680 600,660"], ["d", 4, "510,690 500,740"], ["d", 4, "310,600 300,680 260,750 230,790"], ["d", 4, "400,660 370,720 350,790 300,890 280,920"], ["d", 4, "360,700 400,715 390,770 410,830 412,905"], ["d", 4, "120,740 200,770 300,820 350,860"], ["d", 4, "110,850 200,880 300,930 340,960 320,1098"], ["d", 4, "340,950 470,930 560,915 640,950 660,980"], ["d", 4, "520,820 545,830 540,800 505,820 500,845 480,860 500,880 570,895"], ["d", 4, "130,1000 330,1030 365,1000 365,1050 420,1030 445,1000 480,990 525,1030 515,1080"], ["d", 4, "445,1000 450,1060 430,1098"], ["d", 4, "540,985 585,1000 590,1098"], ["d", 4, "710,645 720,705"], ["d", 4, "850,660 800,740 840,790 780,830 770,930 750,1020 720,1090"], ["d", 4, "0,940 95,970"], ["d", 4, "30,860 60,800"], ["d", 4, "40,1060 95,1060"],
  ["d", 17, "520,-70 640,90 760,270 860,420 900,500 910,620 925,690"], ["d", 13, "925,690 900,820 840,960 780,1110"], ["b", 14, "320,720 400,830 520,1000 600,1130"], ["d", 13, "890,650 960,690 1040,710 1130,770 1230,840"],
  ["d", 9, "985,500 955,445 895,390 720,90 650,0"], ["d", 4, "975,500 1020,530 1160,555 1190,575 1215,605 1210,640 1185,670 1120,690 1070,675 1030,640"], ["d", 4, "1045,500 1040,530"], ["d", 4, "1090,690 1080,740"], ["d", 4, "1150,690 1165,720 1155,755"], ["d", 4, "1195,660 1280,690"], ["d", 4, "1240,690 1215,770"], ["d", 4, "1195,735 1260,760"], ["d", 3, "1165,570 1170,555 1205,575"],
  ["d", 11, "1240,500 1215,500 1240,440 1245,380 1225,260 1230,200 1260,120 1300,70 1370,40 1440,40 1510,60"], ["d", 4, "1290,155 1340,130 1440,135 1500,180"], ["d", 4, "1270,110 1330,100 1440,120 1460,160"], ["d", 4, "1300,35 1340,12 1410,15"], ["d", 4, "1320,75 1395,75"], ["d", 4, "1440,15 1500,55"], ["d", 4, "1328,205 1300,230 1315,270 1300,310 1255,335"], ["d", 4, "1250,375 1355,385 1440,350 1470,300 1500,260"], ["d", 4, "1315,385 1300,490"], ["d", 4, "1310,458 1375,458 1430,440 1510,430"], ["d", 4, "1418,455 1405,565"], ["d", 4, "1245,470 1290,500 1340,575 1420,562"], ["d", 6, "1310,640 1500,610"], ["d", 4, "1500,470 1485,600 1470,760 1490,800"], ["d", 4, "1348,680 1335,820"], ["d", 4, "1340,665 1430,650 1430,690 1435,760 1410,790 1350,810 1360,700 1430,690"], ["d", 4, "1440,765 1510,745"],
  ["d", 11, "1230,840 1300,865 1400,855 1510,810"], ["d", 10, "1230,840 1150,900 1060,970 1035,1020 1020,1110"], ["d", 4, "1135,910 1135,830 1220,830 1165,870"], ["d", 4, "985,905 1050,910 1090,930"], ["d", 4, "990,857 1050,857 960,1015"], ["d", 4, "1060,830 1135,860"], ["d", 4, "1035,765 1060,770 1055,820 1035,810 1035,765"], ["d", 4, "1100,1045 1350,1048 1390,1085"], ["d", 4, "1125,1035 1330,1035 1370,1060"], ["d", 4, "1125,1035 1165,1010 1195,960"], ["d", 9, "1500,935 1390,980 1355,1000 1355,1050 1400,1075 1500,1085"], ["d", 4, "890,1098 915,1045 965,1080"], ["d", 4, "880,920 945,915"], ["d", 4, "880,930 930,980"]
];
// Highway 50: a white carriageway with a grey casing
const highway = [
  ...pts("a", "140,0 165,235 163,330 146,1110"), ...pts("c", "147,100 165,235 215,385 300,620 390,870 412,1010 410,1120"),
  ...pts("c", "488,1120 492,1020 484,930 500,905 490,860 455,830 415,730 350,580 218,270 192,150"), ...pts("a", "190,1080 213,280 211,235 188,0")
];
poly(highway, { fill: "#fff", stroke: "#d2d2d2", "stroke-width": 2.2, "stroke-linejoin": "round" });

const segs = [];
roads.forEach(([t, w, s]) => {
  const p = pts(t, s);
  for (let i = 1; i < p.length; i++) segs.push([...p[i - 1], ...p[i], w]);
  line(p, { stroke: "#fff", "stroke-width": w, "stroke-linecap": "round" });
});
line(pts("c", "424,838 430,880 448,932"), { stroke: "#d3d3d3", "stroke-width": 4 });
line(pts("c", "388,876 398,924"), { stroke: "#d3d3d3", "stroke-width": 3 });
line(pts("c", "457,830 488,858"), { stroke: "#d3d3d3", "stroke-width": 3 });

// Trails
["a|20,885 58,925 72,1010 78,1110", "c|78,0 80,50 50,145 10,200", "c|0,410 45,440 62,515 30,570 15,680 32,735 95,770 125,815 122,925 92,1005 10,1038", "b|535,25 690,25"].forEach(s => {
  const [t, v] = s.split("|");
  line(pts(t, v), { stroke: "#e3cbce", "stroke-width": 3.8, "stroke-dasharray": "15 9" });
});

// Building footprints: seeded scatter inside each survey zone, aligned with the closest road
let seed = 20190712;
const rnd = () => { seed = (seed * 1664525 + 1013904223) % 4294967296; return seed / 4294967296; };
const inside = (x, y, p) => {
  let r = false;
  for (let i = 0, j = p.length - 1; i < p.length; j = i++)
    if ((p[i][1] > y) !== (p[j][1] > y) && x < (p[j][0] - p[i][0]) * (y - p[i][1]) / (p[j][1] - p[i][1]) + p[i][0]) r = !r;
  return r;
};
const nearest = (x, y) => {
  let gap = 1e9, ang = 0;
  for (const [x1, y1, x2, y2, w] of segs) {
    const dx = x2 - x1, dy = y2 - y1, l = dx * dx + dy * dy || 1;
    const k = Math.max(0, Math.min(1, ((x - x1) * dx + (y - y1) * dy) / l));
    const g = Math.hypot(x - x1 - k * dx, y - y1 - k * dy) - w / 2;
    if (g < gap) { gap = g; ang = Math.atan2(dy, dx); }
  }
  return [gap, ang];
};
// [tile, density, share of blue, outline]
const zones = [
  ["a", .6, 1, "545,70 740,60 815,80 815,110 640,130 550,120"], ["a", .65, 1, "645,110 800,110 810,205 845,240 800,250 700,260 690,190 645,170"], ["a", .85, 1, "628,240 720,240 750,320 715,370 670,370 628,320"],
  ["a", .6, 1, "860,260 940,205 1000,215 970,285 920,320 950,350 930,360 900,300"], ["a", .85, 1, "1030,150 1130,140 1140,180 1200,180 1200,130 1270,75 1310,115 1340,180 1280,260 1240,330 1180,340 1110,330 1060,290 1030,230"],
  ["a", .85, 1, "1040,360 1110,330 1150,340 1110,460 1100,500 1020,490 1010,430"], ["a", .6, 1, "1140,360 1200,370 1180,430 1130,460"], ["a", .9, 1, "800,440 870,415 870,460 950,390 975,430 940,490 995,520 870,505 810,480"],
  ["a", .85, 1, "1220,350 1400,340 1405,380 1500,395 1500,480 1400,465 1230,465"], ["a", .9, 1, "1290,290 1380,290 1390,245 1465,220 1450,340 1300,330"], ["a", .6, 1, "1340,100 1400,100 1430,150 1340,155"], ["a", .8, 1, "1440,18 1500,18 1500,80 1440,60"],
  ["a", .9, 1, "790,540 830,505 870,540 830,560"], ["a", .6, 1, "1100,460 1220,475 1300,470 1310,530 1200,530 1060,520"], ["a", .8, 1, "1000,510 1070,520 1160,540 1140,610 1060,640 1070,560 1000,550"],
  ["a", .85, 1, "850,630 900,600 950,640 1010,610 1030,640 1010,680 960,700 935,770 900,740 850,770 820,750 870,700 800,720 800,680"], ["a", .55, 1, "680,600 725,600 725,740 660,715 660,690 690,680"], ["a", .8, 1, "1005,720 1075,760 1060,785 1000,755"],
  ["a", .95, 1, "620,870 710,830 725,900 700,950 630,905"], ["a", .6, 1, "1350,550 1500,560 1500,610 1350,585"], ["a", .85, 1, "1335,590 1370,640 1500,690 1500,790 1450,775 1320,770 1340,700"], ["a", .7, 1, "1260,740 1290,700 1320,740 1310,775 1190,775 1230,730"], ["a", .8, 1, "680,760 710,755 715,810 690,805"], ["a", .8, 1, "770,770 820,760 810,795 780,795"], ["a", .6, 1, "1465,470 1500,475 1500,610 1470,600"],
  ["b", .85, 1, "0,18 70,18 60,70 0,70"], ["b", .5, 1, "110,90 175,130 120,180"], ["b", .9, 1, "300,50 335,50 350,180 360,270 335,270 300,140"], ["b", .9, 1, "255,145 290,145 290,240 255,240"], ["b", .9, 1, "0,200 95,185 60,340 0,330"], ["b", .75, 1, "90,280 240,300 335,290 345,330 300,350 210,350 170,400 60,340"], ["b", .9, 1, "200,385 340,410 340,470 200,440"], ["b", .85, 1, "0,360 200,380 180,440 130,600 100,720 0,700"], ["b", .75, 1, "150,460 340,470 320,620 310,700 260,690 240,560 140,560"], ["b", .8, 1, "110,570 220,600 230,725 105,725"], ["b", .6, 1, "0,700 90,710 95,790 0,790"],
  ["b", .95, 1, "385,262 560,280 560,350 385,325"], ["b", .75, 1, "380,390 480,390 535,440 530,480 385,470"], ["b", .8, 1, "550,395 700,455 640,590 530,520 620,490 550,440"],
  ["a", .8, 0, "720,790 900,760 960,790 960,820 910,890 720,830"], ["a", .6, 0, "1000,790 1170,800 1240,780 1200,810 1150,870 1100,880 1000,840"], ["a", .75, 0, "1280,790 1500,785 1500,840 1350,850"], ["a", .75, 0, "705,860 740,850 740,940 705,940"], ["a", .55, 0, "720,850 910,870 880,960 790,980 730,900"], ["a", .42, 0, "960,900 1200,870 1260,940 1080,1000 830,1030 820,990"], ["a", .6, 0, "820,1000 950,1000 1110,1020 1110,1110 900,1110 840,1060"], ["a", .5, 0, "1150,1030 1250,940 1360,1030 1400,1110 1180,1110"], ["a", .6, 0, "1320,930 1400,870 1440,860 1500,980 1500,1110 1450,1110 1380,1010"],
  ["b", .75, 0, "0,790 90,790 90,1110 0,1110"], ["b", .9, .02, "105,840 300,875 430,945 480,1000 560,1110 170,1110 145,920 110,980"],
  ["c", .95, 0, "740,85 770,85 775,190 790,220 730,230 720,190 745,180"], ["c", 1.3, 0, "800,90 900,100 912,190 860,215 800,170"], ["c", .6, 0, "900,0 1060,0 1060,40 920,35"], ["c", .5, 0, "1030,50 1200,40 1240,100 1200,115 1120,150 1040,160"], ["c", .7, 0, "915,155 965,155 965,210 915,205"], ["c", .9, 0, "1085,235 1240,235 1205,275 1080,300"], ["c", .42, 0, "1060,240 1080,310 960,330 960,345 1000,370 1080,360 1160,400 1240,340 1190,300"], ["c", .9, 0, "1225,325 1265,325 1265,415 1240,415"], ["c", .9, 0, "1290,215 1335,210 1325,280 1295,280"], ["c", .6, 0, "1310,60 1500,0 1500,200 1440,240 1430,180 1300,190 1370,100"], ["c", .9, 0, "1080,385 1150,390 1150,415 1080,410"], ["c", .6, 0, "850,395 950,395 850,435"], ["c", .5, 0, "990,190 1030,190 1030,210 990,210"],
  ["d", .9, 0, "0,0 160,0 250,130 260,210 200,160 0,160"], ["d", .85, .07, "190,0 540,0 570,90 540,150 540,240 310,235 280,160"], ["d", .75, .1, "560,150 620,150 680,235 680,290 560,270"], ["d", .75, .05, "350,240 540,245 570,340 450,320 360,310"], ["d", .6, .12, "270,250 330,250 300,400 270,390"], ["d", .5, .1, "320,330 580,340 580,440 450,430 330,380"], ["d", .75, .1, "590,390 660,395 690,300 725,330 690,460 600,430"], ["d", .9, .06, "580,480 800,450 800,500 780,575 640,600 630,520"], ["d", .75, .15, "240,490 480,490 560,560 510,640 400,640 330,580 230,540"],
  ["d", .85, .15, "130,680 200,600 300,680 260,760 160,740"], ["d", .8, .2, "270,690 400,660 390,720 380,800 340,870 240,850 280,780"], ["d", .7, .35, "115,750 240,780 300,830 260,900 120,870"], ["d", .75, .5, "115,880 240,900 330,960 320,1000 130,980"], ["d", .5, .5, "150,1010 320,1030 300,1090 160,1090"], ["d", .55, .1, "570,690 700,680 740,780 700,860 620,840"], ["d", .75, .4, "740,700 870,680 880,760 830,870 780,870 740,800"], ["d", .5, .3, "690,860 770,900 780,1010 730,1030 700,950"], ["d", .45, .2, "400,900 600,900 630,970 500,960"], ["d", .9, 0, "60,680 95,650 90,860 65,860"], ["d", .5, .3, "60,880 110,870 110,960 70,960"], ["d", .3, .3, "460,690 550,700 550,860 500,840"],
  ["c", .7, 1, "970,445 1040,440 1020,520 970,520"], ["c", .5, 1, "1060,450 1220,440 1200,500 1180,550 1070,570 960,620 990,570"], ["c", .9, 1, "1250,450 1350,445 1350,630 1340,700 1250,650"], ["c", .75, 1, "1380,540 1500,590 1500,650 1400,640 1370,600"], ["c", .5, 1, "995,620 1145,600 1140,625 1040,660"], ["c", .85, 1, "950,715 1060,710 1060,655 1120,660 1120,690 1240,670 1240,740 1110,750 1110,800 990,850 955,770"], ["c", .8, 1, "1275,690 1370,670 1400,690 1395,770 1290,775"], ["c", 1, 1, "1170,775 1290,780 1420,810 1420,850 1190,835"], ["c", .8, 1, "1190,845 1420,850 1420,885 1200,890"], ["c", 1, 1, "1410,680 1500,670 1500,920 1420,915"], ["c", .8, 1, "1010,890 1080,875 1110,930 1010,945"], ["c", .6, 1, "775,950 850,970 900,940 960,940 940,1035 820,1020 775,1000"], ["c", .5, 1, "730,1040 800,1050 790,1098 740,1098"], ["c", .75, 1, "1000,980 1050,975 1020,1040 960,1098 940,1060"], ["c", .8, 1, "1200,960 1340,955 1350,1060 1240,1098 1180,1098 1240,1010"], ["c", .85, 1, "1400,970 1500,960 1500,1098 1400,1098"], ["c", .5, 1, "1040,1040 1200,1060 1200,1098 1040,1098"], ["c", .6, 1, "1350,920 1420,930 1400,960 1350,960"], ["c", .65, 1, "800,605 860,630 835,690 820,680"], ["c", .6, 1, "690,530 745,545 720,590 700,570"],
  ["d", .95, 1, "0,590 70,590 68,1098 0,1098"], ["d", .8, 1, "75,470 200,490 190,520 80,510"], ["d", .9, 1, "85,630 150,600 125,660 85,680"], ["d", .8, 1, "75,990 115,990 130,1090 80,1090"]
];
const done = [];
const blue = { fill: "#719fe6", stroke: "#4488f4", "stroke-width": 1.4 };
const green = { fill: "#96f0bc", stroke: "#86f8b4", "stroke-width": 1.4 };
for (const [t, dens, share, s] of zones) {
  const z = pts(t, s), xs = z.map(p => p[0]), ys = z.map(p => p[1]);
  const step = 3.5, chance = dens * dens * 1.05;
  for (let y = Math.min(...ys); y < Math.max(...ys); y += step)
    for (let x = Math.min(...xs); x < Math.max(...xs); x += step) {
      const cx = x + rnd() * step, cy = y + rnd() * step, keep = rnd();
      if (keep > chance || !inside(cx, cy, z)) continue;
      const [gap, ang] = nearest(cx, cy);
      const w = 2.2 + rnd() * 2.7, h = 1.7 + rnd() * 1.8;
      if (gap < h * .6) continue;
      if (done.some(q => Math.abs(q[0] - cx) < 14 && Math.hypot(q[0] - cx, q[1] - cy) < q[2] + Math.max(w, h) * .68 + .8)) continue;
      done.push([cx, cy, Math.max(w, h) * .74]);
      const a = ang + (rnd() - .5) * .4, c = Math.cos(a), n = Math.sin(a);
      let q = [[-w, -h], [w, -h], [w, h], [-w, h]].map(([u, v]) => [u + (rnd() - .5) * 1.8, v + (rnd() - .5) * 1.8]);
      const odd = rnd();
      if (odd < .13) q.splice(1, 1);
      else if (odd < .3) q.splice(2, 1, [w, 0], [w * .1, .3], [w * .1, h]);
      q = q.map(([u, v]) => [cx + u * c - v * n, cy + u * n + v * c]);
      poly(q, rnd() < share ? blue : green);
    }
}
// Larger surveyed buildings
[["b", "205,25 215,20 260,38 245,72 205,75"], ["b", "15,655 50,625 65,630 70,645 92,650 75,695 50,690 12,675"], ["a", "1385,250 1440,250 1460,232 1468,262 1440,300 1420,285 1425,262 1405,280 1388,275"], ["a", "1293,438 1355,440 1358,462 1293,462"], ["a", "1320,378 1345,365 1400,375 1370,388"], ["a", "1295,398 1350,406 1355,430 1295,420"],
 ["b", "385,442 442,455 438,480 385,468"], ["b", "165,515 185,480 192,550 155,560"], ["b", "195,520 240,530 235,558 195,550"], ["b", "140,285 168,295 150,325 128,310"], ["b", "190,215 230,225 225,255 187,245"],
 ["d", "120,545 140,520 177,540 160,575 125,570"], ["d", "90,560 125,550 125,585 90,578"], ["c", "1400,475 1425,468 1440,495 1415,507"], ["c", "1350,725 1390,727 1390,760 1348,757"], ["d", "378,353 403,353 403,374 378,374"], ["d", "837,693 866,693 866,712 837,712"], ["d", "785,725 800,685 808,692 800,735"], ["d", "755,1030 768,990 780,1030"], ["d", "528,835 552,830 552,858 530,858"], ["d", "270,1045 295,1043 295,1068 272,1068"],
 ["a", "725,485 738,475 745,482 733,497"], ["a", "848,378 855,370 863,380 855,388"], ["a", "735,570 750,558 750,578"], ["a", "775,560 795,545 790,570"], ["a", "1208,645 1232,635 1235,643 1212,655"], ["a", "1282,630 1300,620 1304,628 1288,637"], ["a", "705,995 718,982 727,990 712,1004"], ["a", "688,1040 708,1046 690,1052"], ["a", "618,650 630,642 635,660"], ["a", "622,690 628,672 640,685"], ["b", "88,75 110,80 105,95 90,98"],
 ["c", "870,740 885,740 885,755 870,755"], ["c", "888,770 893,765 895,788"], ["c", "950,550 970,548 955,556"], ["d", "600,155 612,153 618,180 605,182"], ["d", "595,263 613,263 613,276 595,276"], ["d", "800,610 818,608 812,626"]
].forEach(([t, s]) => poly(pts(t, s), { ...blue, fill: "#6f9ce4" }));
[["d", "545,58 570,92 545,112"], ["d", "595,400 655,395 660,425 600,425"], ["b", "112,850 140,855 130,975 105,975"], ["c", "1150,187 1200,182 1208,208 1148,208"], ["c", "1385,302 1395,280 1430,280 1440,302 1425,302 1420,293 1403,293 1400,302"], ["d", "620,620 668,632 622,637"], ["c", "838,306 862,306 862,318 838,318"], ["c", "730,215 750,210 757,245 742,245"], ["c", "935,60 955,42 960,50 940,68"], ["d", "205,248 218,246 218,258 206,258"], ["d", "0,210 18,212 20,230 0,232"]
].forEach(([t, s]) => poly(pts(t, s), green));

// Street names
const defs = el("defs", {});
function along(id, path, text, size, length) {
  el("path", { id, d: path }, defs);
  const tx = el("text", { class: "street", "font-size": size });
  const tp = el("textPath", { href: "#" + id }, tx);
  tp.textContent = text;
  tx.setAttribute("style", "font-family:Lato,'DejaVu Sans',sans-serif;direction:ltr;unicode-bidi:bidi-override;fill:#b9b9b9;stroke:#fff;stroke-width:2.500px;paint-order:stroke");
  if (length) { tx.setAttribute("textLength", length); tp.setAttribute("textLength", length); }
}
along("abd", "M878 772L960 773L1092 787L1120 790", "ABD ALHAMED SHOMAN", 18, 215);
along("abdhe", "M1097 793C1130 791 1160 781 1178 783C1196 785 1208 806 1222 824L1250 860", "עבד אלחמיד שומאן", 18, 140);
along("moshe", "M1265 570Q1284 610 1285 645Q1288 680 1302 698L1360 780", "MOSHE DAYAN משה דיין", 18, 205);
along("begin", "M599 1000L599 950", "AD", 18);
along("sokolov", "M1284 1001L1312 953L1320 938", "רוקיס", 18);
const n50 = el("text", { x: 592, y: 465.5, "font-size": 18.500, style: "font-family:Lato,sans-serif;fill:#989dac;stroke:#fff;stroke-width:3px;paint-order:stroke" });
n50.textContent = "50";

// Armistice line and neighbourhood boundary
const cease = { stroke: "#7dc0f7", "stroke-opacity": .75, "stroke-width": 6, "stroke-dasharray": "10 5.500" };
line([...pts("a", "480,18 510,105 560,330 603,495 603,620 590,780 570,1110"), ...pts("c", "535,600 528,720 512,790 535,960 545,1030 530,1098")], cease);
line(pts("b", "345,18 370,138 590,172 660,208 850,125 1100,15"), cease);
line([...pts("a", "515,10 575,320 635,525 620,690 606,830 620,830 600,1110"), ...pts("c", "560,640 570,740 537,780 528,850 538,970 560,1030 550,1110")], { stroke: "#999", "stroke-width": 5.4, "stroke-linejoin": "miter" });
line([...pts("b", "337,10 360,130 368,195 625,218 710,440 705,465 668,515 650,585 628,600 540,530 520,515 360,455 348,605 330,680 640,1090"), ...pts("d", "950,480 1015,625 1033,695 820,1110")], { stroke: "#999", "stroke-width": 5.2 });
[["d", "888,392 905,388 918,415 900,422"], ["d", "903,428 925,418 936,447 912,452"]].forEach(([t, s]) => poly(pts(t, s), { ...blue, fill: "#4f86d9" }));

// Public facility markers
[["a", 705, 522], ["a", 856, 830], ["a", 927, 808], ["a", 1412, 948], ["a", 1417, 1078], ["a", 1482, 1100], ["b", 217, 1084], ["c", 926, 74], ["c", 742, 231], ["c", 980, 231], ["c", 1012, 264], ["c", 1088, 209], ["c", 1120, 204], ["c", 1433, 161], ["c", 1450, 161], ["c", 851, 306], ["c", 975, 393], ["c", 937, 420], ["d", 179, 177], ["d", 303, 339], ["d", 541, 409], ["d", 498, 566], ["d", 212, 587], ["d", 185, 846]
].forEach(([t, x, y]) => {
  const [[cx, cy]] = pts(t, x + "," + y);
  el("circle", { cx, cy, r: 7.400, fill: "#fff", "fill-opacity": .12, stroke: "#858585", "stroke-width": 1.6 });
});
```
